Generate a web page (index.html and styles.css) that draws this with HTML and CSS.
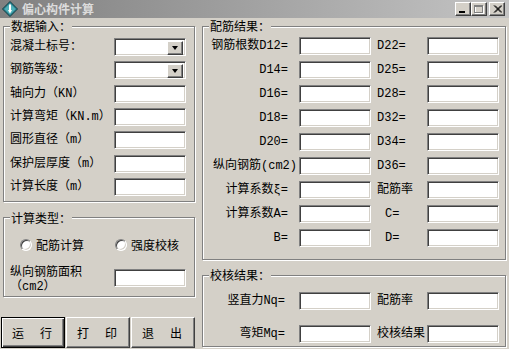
FILE: index.html
```html
<!DOCTYPE html>
<html lang="zh-CN">
<head>
  <meta charset="UTF-8">
  <meta name="viewport" content="width=device-width, initial-scale=1.0">
  <title>偏心构件计算</title>
  <link rel="stylesheet" href="styles.css">
</head>
<body>
  <div class="window">
    <div class="titlebar">
      <svg class="app-icon" width="16" height="16" viewBox="0 0 16 16">
        <polygon points="8,0.5 15.5,8 8,15.5 0.5,8" fill="#2f8793" stroke="#0d3a42"/>
        <polygon points="8,2.5 13.5,8 8,13.5 2.5,8" fill="#4fb0b8"/>
        <path d="M8 3.5 V10" stroke="#fff" stroke-width="2"/>
        <path d="M6 9 L8 12.5 L10 9 Z" fill="#fff"/>
      </svg>
      <span class="title">偏心构件计算</span>
      <div class="controls">
        <span class="ctl">
          <svg width="8" height="8" viewBox="0 0 8 8"><rect x="0" y="6" width="6" height="2" fill="#000"/></svg>
        </span>
        <span class="ctl">
          <svg width="10" height="9" viewBox="0 0 10 9">
            <rect x="1.5" y="1.5" width="8" height="7" fill="none" stroke="#fff"/>
            <rect x="0.5" y="0.5" width="8" height="7" fill="none" stroke="#808080"/>
            <rect x="0" y="1" width="9" height="1" fill="#808080"/>
          </svg>
        </span>
        <span class="ctl ctl-close">
          <svg width="9" height="8" viewBox="0 0 9 8">
            <path d="M1 0.5 L8 7.5 M2 0.5 L9 7.5 M8 0.5 L1 7.5 M9 0.5 L2 7.5" stroke="#000" stroke-width="1"/>
          </svg>
        </span>
      </div>
    </div>

    <div class="client">
      <div class="col-left">
        <fieldset class="group input-group">
          <legend>数据输入：</legend>
          <div class="form">
            <span class="lbl">混凝土标号：</span>
            <div class="edit combo"><span class="drop"></span></div>
            <span class="lbl">钢筋等级：</span>
            <div class="edit combo"><span class="drop"></span></div>
            <span class="lbl">轴向力（KN）</span>
            <input class="edit">
            <span class="lbl">计算弯矩（KN.m）</span>
            <input class="edit">
            <span class="lbl">圆形直径（m）</span>
            <input class="edit">
            <span class="lbl">保护层厚度（m）</span>
            <input class="edit">
            <span class="lbl">计算长度（m）</span>
            <input class="edit">
          </div>
        </fieldset>

        <fieldset class="group type-group">
          <legend>计算类型：</legend>
          <div class="radios">
            <label class="radio"><span class="dot"></span>配筋计算</label>
            <label class="radio"><span class="dot"></span>强度校核</label>
          </div>
          <div class="area-row">
            <span class="lbl">纵向钢筋面积<br>（cm2）</span>
            <input class="edit">
          </div>
        </fieldset>

        <div class="buttons">
          <button class="btn btn-default">运　行</button>
          <button class="btn">打　印</button>
          <button class="btn">退　出</button>
        </div>
      </div>

      <div class="col-right">
        <fieldset class="group result-group">
          <legend>配筋结果：</legend>
          <div class="grid">
            <span class="lbl">钢筋根数D12=</span><input class="edit">
            <span class="lbl2">D22=</span><input class="edit">
            <span class="lbl">D14=</span><input class="edit">
            <span class="lbl2">D25=</span><input class="edit">
            <span class="lbl">D16=</span><input class="edit">
            <span class="lbl2">D28=</span><input class="edit">
            <span class="lbl">D18=</span><input class="edit">
            <span class="lbl2">D32=</span><input class="edit">
            <span class="lbl">D20=</span><input class="edit">
            <span class="lbl2">D34=</span><input class="edit">
            <span class="lbl lbl-long">纵向钢筋(cm2)</span><input class="edit">
            <span class="lbl2">D36=</span><input class="edit">
            <span class="lbl">计算系数ξ=</span><input class="edit">
            <span class="lbl2">配筋率</span><input class="edit">
            <span class="lbl">计算系数A=</span><input class="edit">
            <span class="lbl2 indent">C=</span><input class="edit">
            <span class="lbl">B=</span><input class="edit">
            <span class="lbl2 indent">D=</span><input class="edit">
          </div>
        </fieldset>

        <fieldset class="group check-group">
          <legend>校核结果：</legend>
          <div class="grid check-grid">
            <span class="lbl">竖直力Nq=</span><input class="edit">
            <span class="lbl2">配筋率</span><input class="edit">
            <span class="lbl">弯矩Mq=</span><input class="edit">
            <span class="lbl2">校核结果</span><input class="edit">
          </div>
        </fieldset>
      </div>
    </div>
  </div>
</body>
</html>
```

FILE: styles.css
```css
* {
  margin: 0;
  padding: 0;
  box-sizing: border-box;
}

body {
  width: 509px;
  height: 349px;
  overflow: hidden;
  background: #d4d0c8;
  color: #000;
  font-family: "Liberation Mono", "Noto Sans CJK SC", monospace;
  font-size: 12px;
}

.window {
  width: 509px;
  height: 349px;
}

/* title bar */

.titlebar {
  height: 18px;
  display: flex;
  align-items: center;
  background: linear-gradient(to right, #808080, #c4c4c4);
  padding-left: 2px;
}

.app-icon {
  flex: none;
}

.title {
  margin-left: 4px;
  color: #dcdcdc;
  font-family: "Noto Sans CJK SC", sans-serif;
  font-weight: bold;
  font-size: 12px;
  line-height: 14px;
}

.controls {
  margin-left: auto;
  margin-right: 4px;
  display: flex;
}

.ctl {
  width: 16px;
  height: 14px;
  display: flex;
  align-items: center;
  justify-content: center;
  background: #d4d0c8;
  border: 1px solid;
  border-color: #fff #404040 #404040 #fff;
  box-shadow: inset -1px -1px #808080;
}

.ctl-close {
  margin-left: 2px;
}

/* layout */

.client {
  display: flex;
  padding-left: 1px;
}

.col-left {
  width: 194px;
  display: flex;
  flex-direction: column;
}

.col-right {
  width: 304px;
  margin-left: 7px;
  display: flex;
  flex-direction: column;
}

/* group boxes */

.group {
  min-width: 0;
  border: 1px solid #808080;
  box-shadow: inset 1px 1px #fff, 1px 1px #fff;
  margin-top: 1px;
  padding: 5px 6px 5px 6px;
}

.group legend {
  font-family: "Noto Sans CJK SC", sans-serif;
  line-height: 14px;
  padding: 0 1px;
  background: #d4d0c8;
}

.col-left .group {
  margin-left: 2px;
  width: 192px;
}

/* inputs */

.edit {
  display: block;
  width: 72px;
  height: 18px;
  background: #fff;
  border: 1px solid;
  border-color: #808080 #fff #fff #808080;
  box-shadow: inset 1px 1px #404040, inset -1px -1px #d4d0c8;
  outline: none;
  font: inherit;
}

.combo {
  display: flex;
  justify-content: flex-end;
  padding: 2px;
}

.drop {
  width: 16px;
  height: 14px;
  display: flex;
  align-items: center;
  justify-content: center;
  background: #d4d0c8;
  border: 1px solid;
  border-color: #fff #404040 #404040 #fff;
  box-shadow: inset -1px -1px #808080;
}

.drop::after {
  content: "";
  border-left: 3.5px solid transparent;
  border-right: 3.5px solid transparent;
  border-top: 4px solid #000;
}

.lbl,
.lbl2 {
  white-space: nowrap;
  line-height: 14px;
}

/* data input */

.form {
  display: grid;
  grid-template-columns: 104px 72px;
  grid-auto-rows: 18px;
  row-gap: 5.33px;
  align-items: center;
}

.input-group {
  padding-bottom: 5px;
}

/* calc type */

.type-group {
  margin-top: 9px !important;
  padding-top: 13px;
  padding-bottom: 2px;
}

.radios {
  display: flex;
  height: 14px;
  align-items: center;
  padding-left: 10px;
}

.radio {
  display: flex;
  align-items: center;
  gap: 4px;
  font-family: "Noto Sans CJK SC", sans-serif;
  line-height: 14px;
}

.radio:first-child {
  width: 95px;
}

.dot {
  width: 12px;
  height: 12px;
  border-radius: 50%;
  background: #fff;
  border: 1px solid;
  border-color: #808080 #fff #fff #808080;
  box-shadow: inset 1px 1px #404040, inset -1px -1px #d4d0c8;
}

.area-row {
  display: flex;
  align-items: flex-start;
  margin-top: 14px;
}

.area-row .lbl {
  width: 104px;
  line-height: 14px;
}

.area-row .edit {
  margin-top: 3px;
}

/* buttons */

.buttons {
  display: flex;
  margin-top: 20px;
}

.btn {
  width: 64px;
  height: 31px;
  background: #d4d0c8;
  border: 1px solid;
  border-color: #fff #404040 #404040 #fff;
  box-shadow: inset -1px -1px #808080;
  font-family: "Noto Sans CJK SC", sans-serif;
  font-size: 12px;
  letter-spacing: 2px;
  color: #000;
}

.btn + .btn {
  margin-left: 1px;
}

.btn-default {
  border-color: #000;
  box-shadow: inset 1px 1px #fff, inset -1px -1px #404040, inset -2px -2px #808080;
}

/* results */

.result-group {
  padding-top: 4px;
  padding-bottom: 12px;
}

.grid {
  display: grid;
  grid-template-columns: 90px 72px 56px 72px;
  grid-auto-rows: 18px;
  row-gap: 6px;
  align-items: center;
}

.grid .lbl {
  text-align: right;
  padding-right: 11px;
}

.grid .lbl-long {
  padding-right: 2px;
}

.lbl2 {
  padding-left: 6px;
}

.lbl2.indent {
  padding-left: 14px;
}

.check-group {
  margin-top: 8px !important;
  padding-top: 10px;
  padding-bottom: 3px;
}

.check-grid {
  row-gap: 15px;
}

.check-grid .lbl {
  padding-right: 14px;
}
```
